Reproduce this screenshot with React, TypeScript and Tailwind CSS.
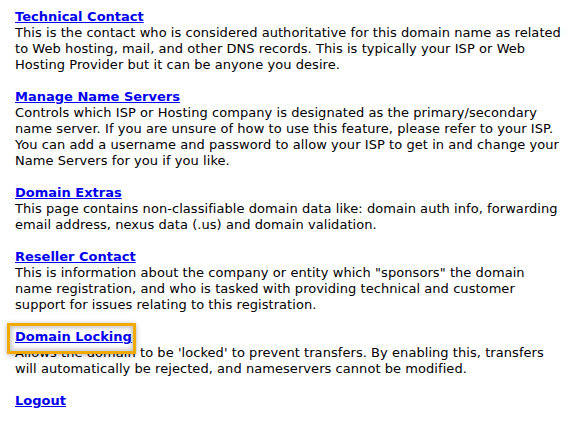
import React from "react";

const sections: { title: string; lines: string[]; highlight?: boolean }[] = [
  {
    title: "Technical Contact",
    lines: [
      "This is the contact who is considered authoritative for this domain name as related",
      "to Web hosting, mail, and other DNS records. This is typically your ISP or Web",
      "Hosting Provider but it can be anyone you desire.",
    ],
  },
  {
    title: "Manage Name Servers",
    lines: [
      "Controls which ISP or Hosting company is designated as the primary/secondary",
      "name server. If you are unsure of how to use this feature, please refer to your ISP.",
      "You can add a username and password to allow your ISP to get in and change your",
      "Name Servers for you if you like.",
    ],
  },
  {
    title: "Domain Extras",
    lines: [
      "This page contains non-classifiable domain data like: domain auth info, forwarding",
      "email address, nexus data (.us) and domain validation.",
    ],
  },
  {
    title: "Reseller Contact",
    lines: [
      "This is information about the company or entity which \"sponsors\" the domain",
      "name registration, and who is tasked with providing technical and customer",
      "support for issues relating to this registration.",
    ],
  },
  {
    title: "Domain Locking",
    highlight: true,
    lines: [
      "Allows the domain to be 'locked' to prevent transfers. By enabling this, transfers",
      "will automatically be rejected, and nameservers cannot be modified.",
    ],
  },
  { title: "Logout", lines: [] },
];

export default function App() {
  return (
    <div
      className="w-[577px] h-[424px] bg-white overflow-hidden pt-[9px] pl-[15px] text-[13px] leading-[16px] text-black"
      style={{ fontFamily: 'Verdana, "DejaVu Sans", sans-serif' }}
    >
      <div className="flex flex-col gap-[16px]">
        {sections.map((s) => (
          <div key={s.title} className="flex flex-col">
            <div className="relative h-[16px]">
              {s.highlight && (
                <div className="absolute left-[-8px] top-[-6px] w-[129px] h-[31px] border-[3px] border-[#f2a900] bg-white shadow-[inset_0_0_4px_2px_rgba(0,0,0,0.22),0_1px_5px_rgba(0,0,0,0.3)] z-10" />
              )}
              <a
                href="#"
                className="relative z-20 font-bold underline text-[#0000ee] whitespace-nowrap"
              >
                {s.title}
              </a>
            </div>
            {s.lines.map((l, i) => (
              <div key={i} className="whitespace-nowrap tracking-[0.06px]">
                {l}
              </div>
            ))}
          </div>
        ))}
      </div>
    </div>
  );
}
